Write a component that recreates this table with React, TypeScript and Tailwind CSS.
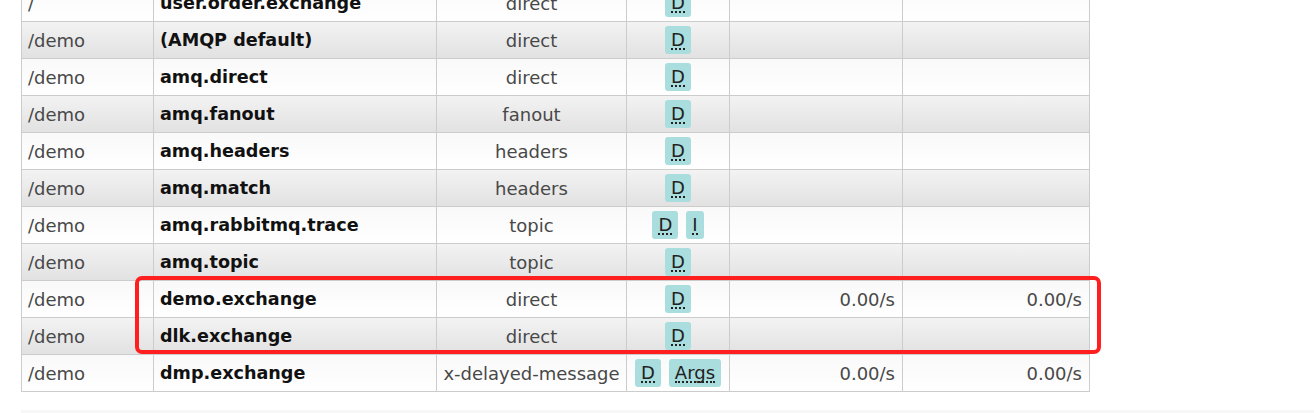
const rows = [
  { vhost: "/", name: "user.order.exchange", type: "direct", features: ["D"], rateIn: "", rateOut: "" },
  { vhost: "/demo", name: "(AMQP default)", type: "direct", features: ["D"], rateIn: "", rateOut: "" },
  { vhost: "/demo", name: "amq.direct", type: "direct", features: ["D"], rateIn: "", rateOut: "" },
  { vhost: "/demo", name: "amq.fanout", type: "fanout", features: ["D"], rateIn: "", rateOut: "" },
  { vhost: "/demo", name: "amq.headers", type: "headers", features: ["D"], rateIn: "", rateOut: "" },
  { vhost: "/demo", name: "amq.match", type: "headers", features: ["D"], rateIn: "", rateOut: "" },
  { vhost: "/demo", name: "amq.rabbitmq.trace", type: "topic", features: ["D", "I"], rateIn: "", rateOut: "" },
  { vhost: "/demo", name: "amq.topic", type: "topic", features: ["D"], rateIn: "", rateOut: "" },
  { vhost: "/demo", name: "demo.exchange", type: "direct", features: ["D"], rateIn: "0.00/s", rateOut: "0.00/s" },
  { vhost: "/demo", name: "dlk.exchange", type: "direct", features: ["D"], rateIn: "", rateOut: "" },
  { vhost: "/demo", name: "dmp.exchange", type: "x-delayed-message", features: ["D", "Args"], rateIn: "0.00/s", rateOut: "0.00/s" },
];

export default function App() {
  return (
    <div
      className="relative h-[413px] overflow-hidden bg-white text-[18px] text-[#484848]"
      style={{ fontFamily: '"DejaVu Sans", Verdana, sans-serif' }}
    >
      <table className="ml-[21px] -mt-[16px] border-collapse table-fixed w-[1068px]">
        <colgroup>
          <col className="w-[132px]" />
          <col className="w-[283px]" />
          <col className="w-[190px]" />
          <col className="w-[103px]" />
          <col className="w-[173px]" />
          <col className="w-[187px]" />
        </colgroup>
        <tbody>
          {rows.map((row, index) => (
            <tr
              key={index}
              className={
                index % 2 === 1
                  ? "h-[37px] bg-gradient-to-b from-[#f3f3f3] to-[#e1e1e1]"
                  : "h-[37px] bg-gradient-to-b from-[#f9f9f9] to-[#ffffff]"
              }
            >
              <td className="border border-[#cccccc] px-[6px] pt-[2px] leading-none whitespace-nowrap">{row.vhost}</td>
              <td className="border border-[#cccccc] px-[6px] pt-[2px] leading-none text-[17.6px] font-bold text-[#111] whitespace-nowrap">
                {row.name}
              </td>
              <td className="border border-[#cccccc] px-[6px] pt-[2px] leading-none text-center whitespace-nowrap">{row.type}</td>
              <td className="border border-[#cccccc] px-[6px] leading-none text-center whitespace-nowrap">
                <div className="flex justify-center gap-[8px]">
                  {row.features.map((f, i) => (
                    <span
                      key={i}
                      className="inline-flex h-[28px] items-center rounded-[3px] bg-[#aadddd] px-[6px] text-[18px] text-[#222]"
                    >
                      <abbr className="no-underline border-b-2 border-dotted border-[#222] leading-[17px]">{f}</abbr>
                    </span>
                  ))}
                </div>
              </td>
              <td className="border border-[#cccccc] px-[7px] pt-[2px] leading-none text-right whitespace-nowrap">{row.rateIn}</td>
              <td className="border border-[#cccccc] px-[7px] pt-[2px] leading-none text-right whitespace-nowrap">{row.rateOut}</td>
            </tr>
          ))}
        </tbody>
      </table>

      <div className="ml-[21px] mt-[18px] h-[20px] bg-[#f7f7f7]" />

      {/* annotation */}
      <div className="absolute left-[135px] top-[276px] h-[78px] w-[966px] rounded-[7px] border-4 border-[#ff1f1f]" />
    </div>
  );
}
